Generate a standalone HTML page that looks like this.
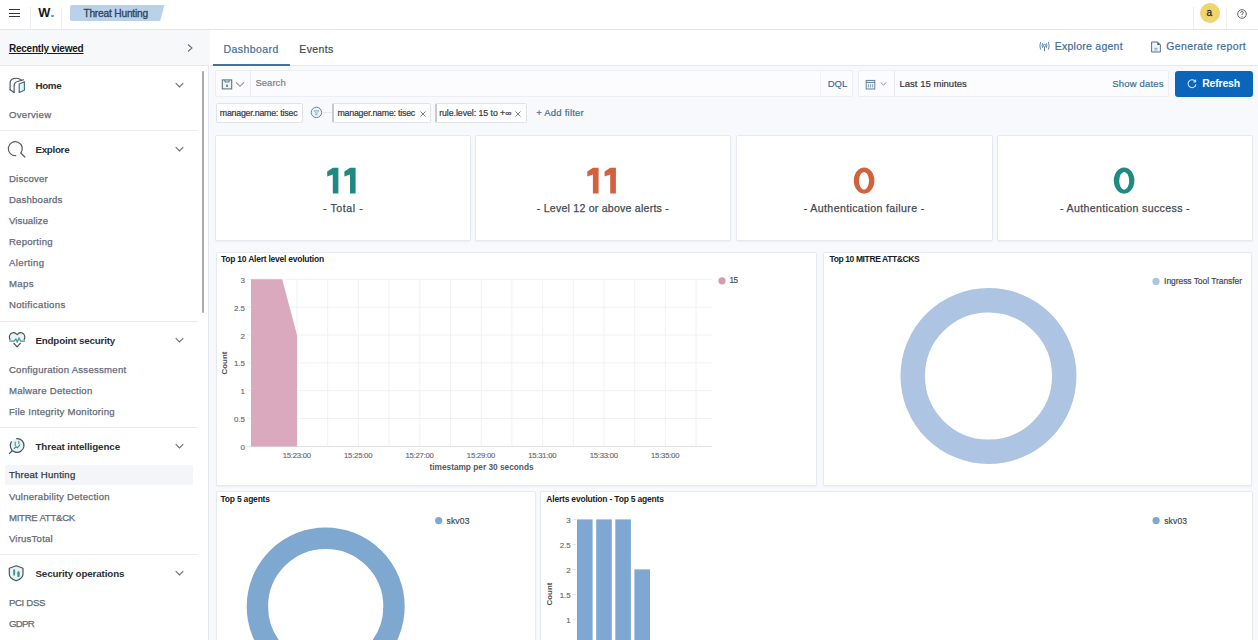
<!DOCTYPE html>
<html><head><meta charset="utf-8"><style>
*{margin:0;padding:0;box-sizing:border-box}
html,body{width:1258px;height:640px;overflow:hidden;background:#f8f9fc;font-family:"Liberation Sans",sans-serif;position:relative}
.a{position:absolute}
.t{position:absolute;white-space:nowrap;line-height:1;font-family:"Liberation Sans",sans-serif}
.hdr{left:0;top:0;width:1258px;height:30px;background:#fff;border-bottom:1px solid #e3e6ec}
.vd{position:absolute;top:7px;width:1px;height:22px;background:#eceef2}
.side{left:0;top:30px;width:209px;height:610px;background:#fff;border-right:1px solid #e3e6ec}
.sep{position:absolute;left:0;width:198px;height:1px;background:#eaebef}
.panel{position:absolute;background:#fff;border:1px solid #e6e9ef;border-radius:2px;box-shadow:0 1px 1.5px rgba(0,0,0,0.05)}
.pill{position:absolute;background:#fff;border:1px solid #e0e3e9;border-radius:2px;height:19.6px;top:103.2px}

</style></head><body>
<!-- header -->
<div class="a hdr"></div>
<div class="a" style="left:9px;top:9px;width:11px;height:1.2px;background:#343741"></div>
<div class="a" style="left:9px;top:12.5px;width:11px;height:1.2px;background:#343741"></div>
<div class="a" style="left:9px;top:16px;width:11px;height:1.2px;background:#343741"></div>
<div class="vd" style="left:30px"></div>
<div class="vd" style="left:61px"></div>
<div class="t" style="left:38.2px;top:7.0px;font-size:12.8px;font-weight:700;color:#17191e;letter-spacing:0px">W</div>
<div class="a" style="left:51.1px;top:14.6px;width:2.9px;height:2.9px;border-radius:50%;background:#80868f"></div>
<svg class="a" style="left:70px;top:5px" width="95" height="16"><path d="M2 0 H94.5 L90.2 16 H2 Q0 16 0 14 V2 Q0 0 2 0Z" fill="#b9d2ea"/></svg>
<div class="vd" style="left:1193px"></div>
<div class="vd" style="left:1226px"></div>
<div class="a" style="left:1199.6px;top:2.8px;width:20.6px;height:20.6px;border-radius:50%;background:#f0d46e"></div>
<div class="t" style="left:1206.6px;top:8.2px;font-size:10px;font-weight:400;color:#2a2a2a;-webkit-text-stroke:0.3px #2a2a2a">a</div>
<svg class="a" style="left:1236px;top:7.5px" width="12" height="12" viewBox="0 0 12 12"><circle cx="6" cy="6" r="4.3" fill="none" stroke="#5a606b" stroke-width="1"/><path d="M4.6 4.8 Q4.6 3.5 6 3.5 Q7.4 3.5 7.4 4.7 Q7.4 5.5 6.1 6 V6.9" fill="none" stroke="#5a606b" stroke-width="0.9"/><circle cx="6.05" cy="8.3" r="0.55" fill="#5a606b"/></svg>

<!-- sidebar -->
<div class="a side"></div>
<div class="a" style="left:0;top:30px;width:209px;height:36px;background:#f7f8fa;border-bottom:1px solid #e6e8ed"></div>
<svg class="a" style="left:185px;top:43px" width="10" height="11"><path d="M3 1.5 L7 5 L3 8.5" fill="none" stroke="#6b7079" stroke-width="1.05"/></svg>
<div class="a" style="left:201.6px;top:71px;width:2.6px;height:242px;background:#a9acb3;border-radius:1px"></div>
<div class="sep" style="top:130px"></div>
<div class="sep" style="top:320.6px"></div>
<div class="sep" style="top:426.8px"></div>
<div class="sep" style="top:554px"></div>
<div class="a" style="left:5px;top:465px;width:188px;height:20px;background:#f4f5f8;border-radius:2px"></div>
<!-- chevrons -->
<svg class="a" style="left:173px;top:80px" width="13" height="10"><path d="M2.7 3.2 L6.5 6.9 L10.3 3.2" fill="none" stroke="#676c75" stroke-width="1.05"/></svg>
<svg class="a" style="left:173px;top:144px" width="13" height="10"><path d="M2.7 3.2 L6.5 6.9 L10.3 3.2" fill="none" stroke="#676c75" stroke-width="1.05"/></svg>
<svg class="a" style="left:173px;top:335px" width="13" height="10"><path d="M2.7 3.2 L6.5 6.9 L10.3 3.2" fill="none" stroke="#676c75" stroke-width="1.05"/></svg>
<svg class="a" style="left:173px;top:441px" width="13" height="10"><path d="M2.7 3.2 L6.5 6.9 L10.3 3.2" fill="none" stroke="#676c75" stroke-width="1.05"/></svg>
<svg class="a" style="left:173px;top:568px" width="13" height="10"><path d="M2.7 3.2 L6.5 6.9 L10.3 3.2" fill="none" stroke="#676c75" stroke-width="1.05"/></svg>
<!-- section icons -->
<svg class="a" style="left:0;top:0" width="210" height="640">
  <g fill="none" stroke="#4d525b" stroke-width="1.15" stroke-linejoin="round" stroke-linecap="round">
    <path d="M10.1 89.7 V83 C10.1 79.6 12.8 78.2 16.4 78.2 C18.6 78.2 20.2 79 21.6 80.1"/>
    <path d="M14.1 92.5 V86 C14.1 83 15.9 81.6 18.3 81.2 L23.6 79.8"/>
    <path d="M10.1 89.7 L14.1 92.5"/>
  </g>
  <path d="M19.2 84.1 L24.4 81.7 V90.2 L19.2 92.5 Z" fill="#e3f4f3" stroke="#41707a" stroke-width="1.15" stroke-linejoin="round"/>
  <path d="M16.2 155.6 A7 7 0 1 1 20.8 153" fill="none" stroke="#595e67" stroke-width="1.25"/>
  <path d="M20.8 153 L24.8 157" stroke="#595e67" stroke-width="1.25" stroke-linecap="round"/>
  <path d="M10.2 340.5 Q8.4 336.5 10.5 334 Q13.5 331 17.1 334.6 Q20.7 331 23.7 334 Q25.8 336.5 24 340.5 Z" fill="#e6f5f4" stroke="none"/>
  <path d="M10.2 340 Q8.4 336.5 10.5 334 Q13.5 331 17.1 334.6 Q20.7 331 23.7 334 Q25.8 336.5 24 340" fill="none" stroke="#4d525b" stroke-width="1.15"/>
  <path d="M13.6 343 L17.1 346.8 L20.6 343" fill="none" stroke="#4d525b" stroke-width="1.15" stroke-linejoin="round"/>
  <path d="M9.2 341.2 H14 L16 339 L17.2 342.2 L19 337.8 L20.6 341.2 H25.1" fill="none" stroke="#4b9696" stroke-width="1.2" stroke-linejoin="round"/>
  <circle cx="17.3" cy="445.5" r="6.9" fill="#e6f5f4"/>
  <path d="M16.2 438.6 A6.9 6.9 0 1 1 11.6 441.3" fill="none" stroke="#4d525b" stroke-width="1.2"/>
  <path d="M11.8 451 L9.4 453.6" stroke="#4d525b" stroke-width="1.2" stroke-linecap="round"/>
  <path d="M14.2 448.5 L16 446.8 L17.4 447.8 L19.8 444.8 M15.2 445.5 V442 M18.8 443.5 V441.2" fill="none" stroke="#3f8a8a" stroke-width="1.05" stroke-linecap="round"/>
  <path d="M16.2 565.8 L23 568.2 V574 Q23 578.5 16.2 580.8 Q9.3 578.5 9.3 574 V568.2 Z" fill="#e6f5f4" stroke="#4d525b" stroke-width="1.2" stroke-linejoin="round"/>
  <path d="M14 569 Q15.4 569.2 15.2 571.5 L15 575.5 H13.4 L13.2 571.5 Q13 569.2 14 569 Z M18.4 571 Q19.8 571.2 19.8 573.5 L19.4 577 H17.6 L17.2 573.5 Q17.1 571.2 18.4 571 Z" fill="#468f8d"/>
</svg>

<!-- main tab bar -->
<div class="a" style="left:210px;top:30px;width:1048px;height:35.5px;background:#fff;border-bottom:1px solid #e3e7ee"></div>
<div class="a" style="left:213.4px;top:64px;width:76.3px;height:1.8px;background:#44729a"></div>
<svg class="a" style="left:1037px;top:40px" width="15" height="13" viewBox="0 0 15 13"><circle cx="7.5" cy="5.5" r="1.2" fill="none" stroke="#5f87ad" stroke-width="1"/><path d="M7.5 6.8 V11.2 M5.6 3.2 Q4.6 5.5 5.6 7.8 M9.4 3.2 Q10.4 5.5 9.4 7.8 M3.6 2 Q2.2 5.8 3.6 9.6 M11.4 2 Q12.8 5.8 11.4 9.6" fill="none" stroke="#5f87ad" stroke-width="1"/></svg>
<svg class="a" style="left:1150px;top:40.5px" width="12" height="12" viewBox="0 0 12 12"><path d="M1.6 1 H7.6 L10.4 3.8 V11 H1.6 Z" fill="#eef6fb" stroke="#5b6a7c" stroke-width="0.95" stroke-linejoin="round"/><path d="M7.4 1 L10.4 4 H7.4 Z" fill="#41596e"/><path d="M4.2 7.3 H7.6 M4.2 9 H7.6" stroke="#7d8da0" stroke-width="0.8"/></svg>

<!-- search bar -->
<div class="a" style="left:215.3px;top:70px;width:637.5px;height:26.5px;background:#fcfcfe;border:1px solid #eceef3;border-radius:2px"></div>
<div class="a" style="left:250px;top:71px;width:1px;height:24.5px;background:#e6e9ef"></div>
<div class="a" style="left:820px;top:71px;width:1px;height:24.5px;background:#f1f2f5"></div>
<svg class="a" style="left:221px;top:79px" width="12" height="11" viewBox="0 0 12 11"><rect x="1.3" y="0.9" width="9.4" height="9" fill="#e9f5f7" stroke="#5f6f78" stroke-width="1.05"/><path d="M3.9 0.9 V3 H8.1 V0.9" fill="none" stroke="#5f6f78" stroke-width="0.9"/><rect x="5" y="5.6" width="2" height="2.4" fill="#7e8e97"/></svg>
<svg class="a" style="left:235px;top:80px" width="10" height="8"><path d="M1 2.3 L5 6.3 L9 2.3" fill="none" stroke="#8b9099" stroke-width="1.1"/></svg>
<div class="a" style="left:858.3px;top:70px;width:311px;height:26.5px;background:#fcfcfe;border:1px solid #eceef3;border-radius:2px"></div>
<div class="a" style="left:894px;top:71px;width:1px;height:24.5px;background:#e6e9ef"></div>
<svg class="a" style="left:865px;top:78.5px" width="11" height="11" viewBox="0 0 11 11"><rect x="1.2" y="1.4" width="8.6" height="8.6" fill="#eaf5fa" stroke="#5b7d99" stroke-width="0.95"/><path d="M1.2 3.4 H9.8" stroke="#5b7d99" stroke-width="0.95"/><path d="M3.4 5.2 V8.4 M5.5 5.2 V8.4 M7.6 5.2 V8.4" stroke="#6b8aa5" stroke-width="0.75"/></svg>
<svg class="a" style="left:879px;top:81px" width="9" height="7"><path d="M1.9 1.4 L4.5 4.3 L7.1 1.4" fill="none" stroke="#8b9099" stroke-width="0.95"/></svg>
<div class="a" style="left:1175px;top:70.6px;width:77.6px;height:26.2px;background:#0b66bb;border-radius:3px"></div>
<svg class="a" style="left:1186px;top:77.5px" width="12" height="12" viewBox="0 0 12 12"><path d="M9.3 3.6 A3.9 3.9 0 1 0 9.9 6.3" fill="none" stroke="#d6ebff" stroke-width="1.05"/><path d="M9.6 1.6 V4 H7.3" fill="none" stroke="#d6ebff" stroke-width="1"/></svg>

<!-- filters -->
<div class="pill" style="left:215.6px;width:87.4px"></div>
<svg class="a" style="left:310px;top:106px" width="13" height="13" viewBox="0 0 13 13"><circle cx="6.4" cy="6.4" r="5.2" fill="#e8f3f8" stroke="#6b8490" stroke-width="1"/><path d="M3.8 4.6 H9 L7 7 V9 H5.8 V7 Z" fill="#c5dbe6" stroke="#8aa6b5" stroke-width="0.6"/></svg>
<div class="a" style="left:322px;top:112px;width:10.4px;height:1px;background:#e6e8ed"></div>
<div class="pill" style="left:332.4px;width:98.6px;border-left:2px solid #c4c9d2"></div>
<div class="pill" style="left:435px;width:92.2px;border-left:2px solid #c4c9d2"></div>
<svg class="a" style="left:418.5px;top:109.5px" width="8" height="8"><path d="M1.5 1.5 L6.5 6.5 M6.5 1.5 L1.5 6.5" stroke="#69707d" stroke-width="0.9"/></svg>
<svg class="a" style="left:514px;top:109.5px" width="8" height="8"><path d="M1.5 1.5 L6.5 6.5 M6.5 1.5 L1.5 6.5" stroke="#69707d" stroke-width="0.9"/></svg>

<!-- cards -->
<div class="panel" style="left:215px;top:135px;width:256px;height:105.5px"></div>
<div class="panel" style="left:475px;top:135px;width:256px;height:105.5px"></div>
<div class="panel" style="left:736px;top:135px;width:257px;height:105.5px"></div>
<div class="panel" style="left:997px;top:135px;width:256px;height:105.5px"></div>

<!-- card digits -->
<svg class="a" style="left:0;top:0" width="1258" height="640">
  <path fill="#1e8a80" d="M332.8 167.8 H338.4 V193.4 H332.8 V174.6 L327.2 176.6 V171.6 Z M350 167.8 H355.6 V193.4 H350 V174.6 L344.4 176.6 V171.6 Z"/>
  <path fill="#d4613e" d="M592.9 167.8 H598.6 V193.4 H592.9 V174.6 L587.3 176.6 V171.6 Z M610.2 167.8 H615.9 V193.4 H610.2 V174.6 L604.6 176.6 V171.6 Z"/>
  <path fill="#d4613e" fill-rule="evenodd" d="M864.1 167.5 A10.3 13.1 0 1 1 864.1 193.7 A10.3 13.1 0 1 1 864.1 167.5 Z M864 171.9 A5 8.9 0 1 0 864 189.7 A5 8.9 0 1 0 864 171.9 Z"/>
  <path fill="#1e8a80" fill-rule="evenodd" d="M1124.1 167.5 A10.3 13.1 0 1 1 1124.1 193.7 A10.3 13.1 0 1 1 1124.1 167.5 Z M1124.2 171.9 A5 8.9 0 1 0 1124.2 189.7 A5 8.9 0 1 0 1124.2 171.9 Z"/>
</svg>

<!-- panels -->
<div class="panel" style="left:215.9px;top:251.5px;width:601.5px;height:234px"></div>
<div class="panel" style="left:823.3px;top:251.5px;width:428.7px;height:234px"></div>
<div class="panel" style="left:216px;top:491px;width:320px;height:160px"></div>
<div class="panel" style="left:540px;top:491px;width:713px;height:160px"></div>

<!-- chart A -->
<svg class="a" style="left:0;top:0" width="1258" height="640">
  <g stroke="#eff1f4" stroke-width="1">
    <line x1="247" y1="279.3" x2="712" y2="279.3"/>
    <line x1="247" y1="307.15" x2="712" y2="307.15"/>
    <line x1="247" y1="335" x2="712" y2="335"/>
    <line x1="247" y1="362.85" x2="712" y2="362.85"/>
    <line x1="247" y1="390.7" x2="712" y2="390.7"/>
    <line x1="247" y1="418.55" x2="712" y2="418.55"/>
    <line x1="266.3" y1="279.3" x2="266.3" y2="446.4"/>
    <line x1="297" y1="279.3" x2="297" y2="446.4"/>
    <line x1="327.7" y1="279.3" x2="327.7" y2="446.4"/>
    <line x1="358.4" y1="279.3" x2="358.4" y2="446.4"/>
    <line x1="389.1" y1="279.3" x2="389.1" y2="446.4"/>
    <line x1="419.8" y1="279.3" x2="419.8" y2="446.4"/>
    <line x1="450.5" y1="279.3" x2="450.5" y2="446.4"/>
    <line x1="481.2" y1="279.3" x2="481.2" y2="446.4"/>
    <line x1="511.9" y1="279.3" x2="511.9" y2="446.4"/>
    <line x1="542.6" y1="279.3" x2="542.6" y2="446.4"/>
    <line x1="573.3" y1="279.3" x2="573.3" y2="446.4"/>
    <line x1="604" y1="279.3" x2="604" y2="446.4"/>
    <line x1="634.7" y1="279.3" x2="634.7" y2="446.4"/>
    <line x1="665.4" y1="279.3" x2="665.4" y2="446.4"/>
    <line x1="696.1" y1="279.3" x2="696.1" y2="446.4"/>
  </g>
  <line x1="247" y1="446.4" x2="712" y2="446.4" stroke="#dcdfe5" stroke-width="1"/>
  <path d="M251 446.4 V279.3 H282.2 L297 335 V446.4 Z" fill="#dba9bd"/>
  <circle cx="722" cy="280.8" r="3.6" fill="#d59bb0"/>
  <circle cx="988.5" cy="376" r="75.75" fill="none" stroke="#adc5e2" stroke-width="24.5"/>
  <circle cx="325.7" cy="606.5" r="68.3" fill="none" stroke="#7fa8d1" stroke-width="21.4"/>
  <circle cx="1156" cy="281.4" r="3.6" fill="#adc5e2"/>
  <circle cx="438.7" cy="520.6" r="3.6" fill="#7fa8d1"/>
  <circle cx="1156.1" cy="520.6" r="3.6" fill="#7fa8d1"/>
  <line x1="572.5" y1="519.4" x2="576" y2="519.4" stroke="#e3e5ea" stroke-width="1"/>
  <line x1="572.5" y1="544.4" x2="576" y2="544.4" stroke="#e3e5ea" stroke-width="1"/>
  <line x1="572.5" y1="569.4" x2="576" y2="569.4" stroke="#e3e5ea" stroke-width="1"/>
  <line x1="572.5" y1="594.4" x2="576" y2="594.4" stroke="#e3e5ea" stroke-width="1"/>
  <line x1="572.5" y1="619.4" x2="576" y2="619.4" stroke="#e3e5ea" stroke-width="1"/>
  <g fill="#7ea8d3">
    <rect x="577" y="519.4" width="15.6" height="130"/>
    <rect x="596.2" y="519.4" width="15.6" height="130"/>
    <rect x="615.3" y="519.4" width="15.6" height="130"/>
    <rect x="634.4" y="569.4" width="15.6" height="80"/>
  </g>
</svg>
<div class="t" style="left:224.6px;top:363px;font-size:7.9px;font-weight:700;color:#4b4f57;transform:translate(-50%,-50%) rotate(-90deg)">Count</div>
<div class="t" style="left:549.8px;top:593.5px;font-size:7.9px;font-weight:700;color:#4b4f57;transform:translate(-50%,-50%) rotate(-90deg)">Count</div>

<div class="t" style="top:8.77px;font-size:10.2px;font-weight:400;color:#34475c;letter-spacing:-0.198px;-webkit-text-stroke:0.35px #34475c;left:83.39px;">Threat Hunting</div>
<div class="t" style="top:43.83px;font-size:10px;font-weight:700;color:#1a1c21;letter-spacing:-0.215px;text-decoration:underline;text-underline-offset:1px;left:8.90px;">Recently viewed</div>
<div class="t" style="top:80.80px;font-size:9.8px;font-weight:700;color:#2c2f36;letter-spacing:-0.350px;left:35.41px;">Home</div>
<div class="t" style="top:144.70px;font-size:9.8px;font-weight:700;color:#2c2f36;letter-spacing:-0.292px;left:35.41px;">Explore</div>
<div class="t" style="top:335.70px;font-size:9.8px;font-weight:700;color:#2c2f36;letter-spacing:-0.179px;left:35.41px;">Endpoint security</div>
<div class="t" style="top:441.50px;font-size:9.8px;font-weight:700;color:#2c2f36;letter-spacing:-0.104px;left:35.41px;">Threat intelligence</div>
<div class="t" style="top:568.50px;font-size:9.8px;font-weight:700;color:#2c2f36;letter-spacing:-0.132px;left:35.41px;">Security operations</div>
<div class="t" style="top:110.37px;font-size:9.6px;font-weight:400;color:#646a77;letter-spacing:0.312px;-webkit-text-stroke:0.25px #646a77;left:8.92px;">Overview</div>
<div class="t" style="top:174.37px;font-size:9.6px;font-weight:400;color:#646a77;letter-spacing:0.220px;-webkit-text-stroke:0.25px #646a77;left:8.92px;">Discover</div>
<div class="t" style="top:195.37px;font-size:9.6px;font-weight:400;color:#646a77;letter-spacing:0.193px;-webkit-text-stroke:0.25px #646a77;left:8.92px;">Dashboards</div>
<div class="t" style="top:216.37px;font-size:9.6px;font-weight:400;color:#646a77;letter-spacing:0.117px;-webkit-text-stroke:0.25px #646a77;left:8.92px;">Visualize</div>
<div class="t" style="top:237.37px;font-size:9.6px;font-weight:400;color:#646a77;letter-spacing:0.257px;-webkit-text-stroke:0.25px #646a77;left:8.92px;">Reporting</div>
<div class="t" style="top:258.37px;font-size:9.6px;font-weight:400;color:#646a77;letter-spacing:0.391px;-webkit-text-stroke:0.25px #646a77;left:8.92px;">Alerting</div>
<div class="t" style="top:279.37px;font-size:9.6px;font-weight:400;color:#646a77;letter-spacing:0.366px;-webkit-text-stroke:0.25px #646a77;left:8.92px;">Maps</div>
<div class="t" style="top:300.37px;font-size:9.6px;font-weight:400;color:#646a77;letter-spacing:0.342px;-webkit-text-stroke:0.25px #646a77;left:8.92px;">Notifications</div>
<div class="t" style="top:364.97px;font-size:9.6px;font-weight:400;color:#646a77;letter-spacing:0.253px;-webkit-text-stroke:0.25px #646a77;left:8.92px;">Configuration Assessment</div>
<div class="t" style="top:385.97px;font-size:9.6px;font-weight:400;color:#646a77;letter-spacing:0.245px;-webkit-text-stroke:0.25px #646a77;left:8.92px;">Malware Detection</div>
<div class="t" style="top:406.87px;font-size:9.6px;font-weight:400;color:#646a77;letter-spacing:0.248px;-webkit-text-stroke:0.25px #646a77;left:8.92px;">File Integrity Monitoring</div>
<div class="t" style="top:470.47px;font-size:9.6px;font-weight:400;color:#343741;letter-spacing:0.223px;-webkit-text-stroke:0.25px #343741;left:8.92px;">Threat Hunting</div>
<div class="t" style="top:491.67px;font-size:9.6px;font-weight:400;color:#646a77;letter-spacing:0.257px;-webkit-text-stroke:0.25px #646a77;left:8.92px;">Vulnerability Detection</div>
<div class="t" style="top:512.77px;font-size:9.6px;font-weight:400;color:#646a77;letter-spacing:-0.251px;-webkit-text-stroke:0.25px #646a77;left:8.92px;">MITRE ATT&amp;CK</div>
<div class="t" style="top:533.77px;font-size:9.6px;font-weight:400;color:#646a77;letter-spacing:0.202px;-webkit-text-stroke:0.25px #646a77;left:8.92px;">VirusTotal</div>
<div class="t" style="top:597.57px;font-size:9.6px;font-weight:400;color:#646a77;letter-spacing:-0.320px;-webkit-text-stroke:0.25px #646a77;left:8.92px;">PCI DSS</div>
<div class="t" style="top:618.67px;font-size:9.6px;font-weight:400;color:#646a77;letter-spacing:-0.650px;-webkit-text-stroke:0.25px #646a77;left:8.92px;">GDPR</div>
<div class="t" style="top:43.51px;font-size:10.5px;font-weight:400;color:#3d6d98;letter-spacing:0.433px;-webkit-text-stroke:0.2px #3d6d98;left:223.57px;">Dashboard</div>
<div class="t" style="top:43.51px;font-size:10.5px;font-weight:400;color:#43474f;letter-spacing:0.346px;-webkit-text-stroke:0.2px #43474f;left:299.37px;">Events</div>
<div class="t" style="top:41.11px;font-size:10.5px;font-weight:400;color:#3d6d98;letter-spacing:0.254px;-webkit-text-stroke:0.2px #3d6d98;left:1054.77px;">Explore agent</div>
<div class="t" style="top:41.11px;font-size:10.5px;font-weight:400;color:#3d6d98;letter-spacing:0.393px;-webkit-text-stroke:0.2px #3d6d98;left:1166.17px;">Generate report</div>
<div class="t" style="top:78.46px;font-size:9.5px;font-weight:400;color:#7b818b;letter-spacing:0.030px;-webkit-text-stroke:0.2px #7b818b;left:255.43px;">Search</div>
<div class="t" style="top:78.96px;font-size:9.5px;font-weight:400;color:#3d6d98;letter-spacing:-0.093px;-webkit-text-stroke:0.2px #3d6d98;left:827.83px;">DQL</div>
<div class="t" style="top:78.96px;font-size:9.5px;font-weight:400;color:#343741;letter-spacing:0.027px;-webkit-text-stroke:0.2px #343741;left:899.43px;">Last 15 minutes</div>
<div class="t" style="top:78.96px;font-size:9.5px;font-weight:400;color:#3d6d98;letter-spacing:0.200px;-webkit-text-stroke:0.2px #3d6d98;left:1112.13px;">Show dates</div>
<div class="t" style="top:78.21px;font-size:10.5px;font-weight:700;color:#ffffff;letter-spacing:-0.178px;left:1202.17px;">Refresh</div>
<div class="t" style="top:108.85px;font-size:8.8px;font-weight:400;color:#343741;letter-spacing:-0.215px;-webkit-text-stroke:0.2px #343741;left:219.77px;">manager.name: tisec</div>
<div class="t" style="top:108.85px;font-size:8.8px;font-weight:400;color:#343741;letter-spacing:-0.215px;-webkit-text-stroke:0.2px #343741;left:337.47px;">manager.name: tisec</div>
<div class="t" style="top:108.85px;font-size:8.8px;font-weight:400;color:#343741;letter-spacing:-0.064px;-webkit-text-stroke:0.2px #343741;left:439.17px;">rule.level: 15 to +∞</div>
<div class="t" style="top:108.26px;font-size:9.5px;font-weight:400;color:#3d6d98;letter-spacing:0.228px;-webkit-text-stroke:0.2px #3d6d98;left:536.13px;">+ Add filter</div>
<div class="t" style="top:203.23px;font-size:10.6px;font-weight:400;color:#454a53;letter-spacing:0.576px;-webkit-text-stroke:0.25px #454a53;left:323.01px;">- Total -</div>
<div class="t" style="top:203.23px;font-size:10.6px;font-weight:400;color:#454a53;letter-spacing:0.220px;-webkit-text-stroke:0.25px #454a53;left:536.81px;">- Level 12 or above alerts -</div>
<div class="t" style="top:203.23px;font-size:10.6px;font-weight:400;color:#454a53;letter-spacing:0.374px;-webkit-text-stroke:0.25px #454a53;left:803.71px;">- Authentication failure -</div>
<div class="t" style="top:203.23px;font-size:10.6px;font-weight:400;color:#454a53;letter-spacing:0.357px;-webkit-text-stroke:0.25px #454a53;left:1060.01px;">- Authentication success -</div>
<div class="t" style="top:255.20px;font-size:8.5px;font-weight:700;color:#1a1c21;letter-spacing:-0.238px;left:220.99px;">Top 10 Alert level evolution</div>
<div class="t" style="top:255.00px;font-size:8.5px;font-weight:700;color:#1a1c21;letter-spacing:-0.385px;left:829.49px;">Top 10 MITRE ATT&amp;CKS</div>
<div class="t" style="top:495.30px;font-size:8.5px;font-weight:700;color:#1a1c21;letter-spacing:-0.211px;left:220.49px;">Top 5 agents</div>
<div class="t" style="top:495.40px;font-size:8.5px;font-weight:700;color:#1a1c21;letter-spacing:-0.197px;left:546.29px;">Alerts evolution - Top 5 agents</div>
<div class="t" style="top:276.91px;font-size:7.9px;font-weight:400;color:#676b73;letter-spacing:0.000px;-webkit-text-stroke:0.15px #676b73;right:1013px;">3</div>
<div class="t" style="top:304.76px;font-size:7.9px;font-weight:400;color:#676b73;letter-spacing:0.000px;-webkit-text-stroke:0.15px #676b73;right:1013px;">2.5</div>
<div class="t" style="top:332.61px;font-size:7.9px;font-weight:400;color:#676b73;letter-spacing:0.000px;-webkit-text-stroke:0.15px #676b73;right:1013px;">2</div>
<div class="t" style="top:360.46px;font-size:7.9px;font-weight:400;color:#676b73;letter-spacing:0.000px;-webkit-text-stroke:0.15px #676b73;right:1013px;">1.5</div>
<div class="t" style="top:388.31px;font-size:7.9px;font-weight:400;color:#676b73;letter-spacing:0.000px;-webkit-text-stroke:0.15px #676b73;right:1013px;">1</div>
<div class="t" style="top:416.16px;font-size:7.9px;font-weight:400;color:#676b73;letter-spacing:0.000px;-webkit-text-stroke:0.15px #676b73;right:1013px;">0.5</div>
<div class="t" style="top:444.01px;font-size:7.9px;font-weight:400;color:#676b73;letter-spacing:0.000px;-webkit-text-stroke:0.15px #676b73;right:1013px;">0</div>
<div class="t" style="top:452.28px;font-size:7.7px;font-weight:400;color:#676b73;letter-spacing:-0.217px;-webkit-text-stroke:0.15px #676b73;left:282.64px;">15:23:00</div>
<div class="t" style="top:452.28px;font-size:7.7px;font-weight:400;color:#676b73;letter-spacing:-0.217px;-webkit-text-stroke:0.15px #676b73;left:344.04px;">15:25:00</div>
<div class="t" style="top:452.28px;font-size:7.7px;font-weight:400;color:#676b73;letter-spacing:-0.217px;-webkit-text-stroke:0.15px #676b73;left:405.44px;">15:27:00</div>
<div class="t" style="top:452.28px;font-size:7.7px;font-weight:400;color:#676b73;letter-spacing:-0.217px;-webkit-text-stroke:0.15px #676b73;left:466.84px;">15:29:00</div>
<div class="t" style="top:452.28px;font-size:7.7px;font-weight:400;color:#676b73;letter-spacing:-0.217px;-webkit-text-stroke:0.15px #676b73;left:528.24px;">15:31:00</div>
<div class="t" style="top:452.28px;font-size:7.7px;font-weight:400;color:#676b73;letter-spacing:-0.217px;-webkit-text-stroke:0.15px #676b73;left:589.64px;">15:33:00</div>
<div class="t" style="top:452.28px;font-size:7.7px;font-weight:400;color:#676b73;letter-spacing:-0.217px;-webkit-text-stroke:0.15px #676b73;left:651.04px;">15:35:00</div>
<div class="t" style="top:462.77px;font-size:8.3px;font-weight:700;color:#535966;letter-spacing:-0.007px;left:429.50px;">timestamp per 30 seconds</div>
<div class="t" style="top:277.26px;font-size:8.2px;font-weight:400;color:#464a52;letter-spacing:-0.553px;-webkit-text-stroke:0.15px #464a52;left:729.51px;">15</div>
<div class="t" style="top:277.40px;font-size:8.5px;font-weight:400;color:#464a52;letter-spacing:-0.062px;-webkit-text-stroke:0.2px #464a52;left:1164.09px;">Ingress Tool Transfer</div>
<div class="t" style="top:516.60px;font-size:8.5px;font-weight:400;color:#464a52;letter-spacing:0.190px;-webkit-text-stroke:0.2px #464a52;left:446.49px;">skv03</div>
<div class="t" style="top:516.60px;font-size:8.5px;font-weight:400;color:#464a52;letter-spacing:0.165px;-webkit-text-stroke:0.2px #464a52;left:1164.19px;">skv03</div>
<div class="t" style="top:516.51px;font-size:7.9px;font-weight:400;color:#676b73;letter-spacing:0.000px;-webkit-text-stroke:0.15px #676b73;right:687.4px;">3</div>
<div class="t" style="top:541.51px;font-size:7.9px;font-weight:400;color:#676b73;letter-spacing:0.000px;-webkit-text-stroke:0.15px #676b73;right:687.4px;">2.5</div>
<div class="t" style="top:566.51px;font-size:7.9px;font-weight:400;color:#676b73;letter-spacing:0.000px;-webkit-text-stroke:0.15px #676b73;right:687.4px;">2</div>
<div class="t" style="top:591.51px;font-size:7.9px;font-weight:400;color:#676b73;letter-spacing:0.000px;-webkit-text-stroke:0.15px #676b73;right:687.4px;">1.5</div>
<div class="t" style="top:616.51px;font-size:7.9px;font-weight:400;color:#676b73;letter-spacing:0.000px;-webkit-text-stroke:0.15px #676b73;right:687.4px;">1</div>
</body></html>
